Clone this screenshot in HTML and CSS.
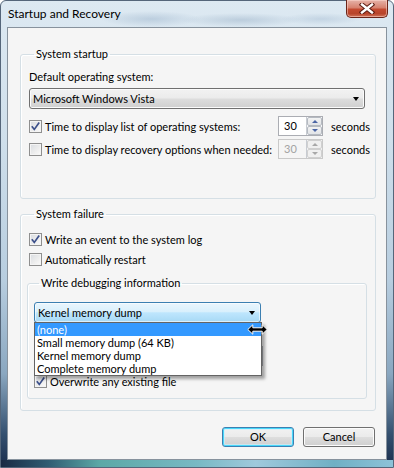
FILE: index.html
```html
<!DOCTYPE html>
<html>
<head>
<meta charset="utf-8">
<title>Startup and Recovery</title>
<link rel="stylesheet" href="styles.css">
</head>
<body>
<div class="window">
  <div class="titlebar">
    <span class="title">Startup and Recovery</span>
    <div class="close">
      <svg width="16" height="11" viewBox="0 0 16 11"><path d="M3 1.5 L13 9.5 M13 1.5 L3 9.5" stroke="#5a1c12" stroke-width="4.4" stroke-linecap="square"/><path d="M3 1.5 L13 9.5 M13 1.5 L3 9.5" stroke="#ffffff" stroke-width="2.4" stroke-linecap="square"/></svg>
    </div>
  </div>
  <div class="client">
    <fieldset class="group g1">
      <legend>System startup</legend>
      <div class="label">Default operating system:</div>
      <div class="combo">
        <span class="combo-text">Microsoft Windows Vista</span>
        <span class="arrow"></span>
      </div>
      <div class="row timer">
        <span class="check checked"><svg width="11" height="11" viewBox="0 0 11 11"><path d="M1.8 5.2 L4.3 8.4 L9.2 1.6" fill="none" stroke="#3b4f8a" stroke-width="1.7"/></svg></span>
        <span class="row-label">Time to display list of operating systems:</span>
        <div class="spin">
          <span class="spin-value">30</span>
          <span class="spin-btns"><span class="sb up"></span><span class="sb down"></span></span>
        </div>
        <span class="unit">seconds</span>
      </div>
      <div class="row timer second">
        <span class="check"></span>
        <span class="row-label">Time to display recovery options when needed:</span>
        <div class="spin disabled">
          <span class="spin-value">30</span>
          <span class="spin-btns"><span class="sb up"></span><span class="sb down"></span></span>
        </div>
        <span class="unit">seconds</span>
      </div>
    </fieldset>

    <fieldset class="group g2">
      <legend>System failure</legend>
      <div class="row">
        <span class="check checked"><svg width="11" height="11" viewBox="0 0 11 11"><path d="M1.8 5.2 L4.3 8.4 L9.2 1.6" fill="none" stroke="#3b4f8a" stroke-width="1.7"/></svg></span>
        <span class="row-label">Write an event to the system log</span>
      </div>
      <div class="row second-fail">
        <span class="check"></span>
        <span class="row-label">Automatically restart</span>
      </div>
      <fieldset class="group g3">
        <legend>Write debugging information</legend>
        <div class="combo-wrap">
          <div class="combo hot">
            <span class="combo-text">Kernel memory dump</span>
            <span class="arrow"></span>
          </div>
          <ul class="droplist">
            <li class="selected">(none)</li>
            <li>Small memory dump (64 KB)</li>
            <li>Kernel memory dump</li>
            <li>Complete memory dump</li>
          </ul>
        </div>
        <div class="label dump-label"></div>
        <div class="textbox"></div>
        <div class="row overwrite">
          <span class="check checked"><svg width="11" height="11" viewBox="0 0 11 11"><path d="M1.8 5.2 L4.3 8.4 L9.2 1.6" fill="none" stroke="#3b4f8a" stroke-width="1.7"/></svg></span>
          <span class="row-label">Overwrite any existing file</span>
        </div>
      </fieldset>
    </fieldset>

    <div class="buttons">
      <div class="btn default">OK</div>
      <div class="btn">Cancel</div>
    </div>
  </div>
  <svg class="cursor" width="21" height="11" viewBox="0 0 21 11"><path d="M0.8 5.5 L5.8 0.8 L5.8 3.8 L15.2 3.8 L15.2 0.8 L20.2 5.5 L15.2 10.2 L15.2 7.2 L5.8 7.2 L5.8 10.2 Z" fill="#000" stroke="#fff" stroke-width="1"/></svg>
</div>
</body>
</html>
```
FILE: styles.css
```css
* { box-sizing: border-box; }
html, body { margin: 0; padding: 0; }
body {
  width: 394px;
  height: 468px;
  overflow: hidden;
  font-family: Lato, "Liberation Sans", sans-serif;
  font-size: 11px;
  color: #000;
  background: #fff;
}
.window {
  position: relative;
  width: 394px;
  height: 468px;
  display: flex;
  flex-direction: column;
  border: 1px solid #55667a;
  border-radius: 6px 6px 0 0;
  background: linear-gradient(180deg, #dde9f2 0%, #cfdfeb 30%, #b7cddf 60%, #8aa7c0 80%, #34506f 93%, #1b2d4c 100%);
}
.titlebar {
  height: 26px;
  display: flex;
  align-items: flex-start;
  background:
    radial-gradient(ellipse 50px 8px at 150px 18px, rgba(150,175,200,0.45), rgba(150,175,200,0) 100%),
    radial-gradient(ellipse 60px 7px at 240px 19px, rgba(140,165,190,0.4), rgba(140,165,190,0) 100%),
    radial-gradient(ellipse 40px 6px at 320px 18px, rgba(150,175,200,0.35), rgba(150,175,200,0) 100%);
}
.title {
  font-size: 12px;
  line-height: 14px;
  padding: 6px 0 0 7px;
  color: #000;
}
.close {
  margin-left: auto;
  margin-right: 5px;
  margin-top: -1px;
  width: 42px;
  height: 18px;
  border: 1px solid #6b2519;
  border-top: none;
  border-radius: 0 0 5px 5px;
  background: linear-gradient(180deg, #e6b3a8 0%, #d7826f 45%, #c34a30 55%, #b8452b 80%, #d0735a 100%);
  box-shadow: inset 0 0 0 1px rgba(255,220,210,0.5);
  display: flex;
  align-items: center;
  justify-content: center;
}
.client {
  flex: 1;
  margin: 0 6px 7px 6px;
  border: 1px solid #87929d;
  background: #f5f5f5;
  display: flex;
  flex-direction: column;
}
.window::after {
  content: "";
  position: absolute;
  left: 0; right: 0; bottom: 0;
  height: 7px;
  background: linear-gradient(90deg, #1a2a44 0%, #2f5c72 12%, #5ba8a6 25%, #78b9c4 50%, #9fc9dc 65%, #6fb0c4 85%, #8dc2d8 100%);
}

/* group boxes */
.group {
  margin: 0;
  padding: 0;
  min-width: 0;
  border: 1px solid #d5dfe5;
  border-radius: 3px;
  box-shadow: inset 1px 1px 0 #ffffff;
}
.group legend {
  margin-left: 5px;
  padding: 0 2px;
  line-height: 14px;
  font-size: 11px;
}
.g1 {
  margin: 19px 10px 0 12px;
  padding: 8px 10px 39px 8px;
}
.g2 {
  margin: 8px 10px 0 12px;
  padding: 11px 8px 11px 8px;
}
.g3 {
  margin: 9px 0 0 -2px;
  padding: 12px 0 9px 6px;
}

.label {
  line-height: 15px;
  height: 15px;
}

/* combobox */
.combo {
  margin-top: 4px;
  height: 21px;
  border: 1px solid #707070;
  border-radius: 3px;
  background: linear-gradient(180deg, #f2f2f2 0%, #ebebeb 48%, #dddddd 52%, #cfcfcf 100%);
  box-shadow: inset 0 0 0 1px #fbfbfb;
  display: flex;
  align-items: center;
  padding: 0 5px 0 3px;
}
.combo-text { flex: 1; line-height: 15px; }
.arrow {
  width: 0; height: 0;
  border-left: 3.5px solid transparent;
  border-right: 3.5px solid transparent;
  border-top: 4px solid #000;
  margin-top: 1px;
}
.combo-wrap {
  position: relative;
  width: 227px;
}
.combo.hot {
  margin-top: 0;
  border-color: #3c7fb1;
  background: linear-gradient(180deg, #eaf6fd 0%, #d9f0fc 45%, #bee6fd 52%, #a7d9f5 100%);
  box-shadow: inset 0 0 0 1px rgba(255,255,255,0.6);
  padding-left: 3px;
}
.droplist {
  position: absolute;
  z-index: 5;
  top: 20px;
  left: 0;
  width: 228px;
  margin: 0;
  padding: 0;
  list-style: none;
  background: #fff;
  border: 1px solid #646464;
  box-shadow: 3px 3px 3px rgba(0,0,0,0.35);
}
.droplist li {
  height: 13px;
  line-height: 13px;
  padding-left: 2px;
  white-space: nowrap;
}
.droplist li.selected {
  background: #3399ff;
  color: #fff;
}

/* rows */
.row {
  display: flex;
  align-items: center;
  height: 15px;
}
.row-label { margin-left: 3px; line-height: 15px; white-space: nowrap; }
.timer {
  height: 20px;
  margin-top: 7px;
  margin-right: -8px;
}
.timer .row-label { flex: 1; min-width: 0; }
.timer.second { margin-top: 3px; }
.second-fail { margin-top: 5px; }

.check {
  flex: none;
  width: 13px;
  height: 13px;
  border: 1px solid #8f8f8f;
  background: linear-gradient(135deg, #d8dbe0 0%, #eeeeee 60%, #fbfbfb 100%);
  box-shadow: inset 0 0 0 1px #f4f4f4;
  display: flex;
  align-items: center;
  justify-content: center;
}
.check svg { display: block; }

/* spin box */
.spin {
  flex: none;
  width: 45px;
  height: 20px;
  border: 1px solid #abadb3;
  background: #fff;
  display: flex;
  margin-right: 8px;
}
.spin-value {
  flex: 1;
  padding-left: 5px;
  line-height: 18px;
}
.spin-btns {
  width: 16px;
  display: flex;
  flex-direction: column;
  border-left: 1px solid #c8ccd2;
}
.sb {
  flex: 1;
  display: flex;
  align-items: center;
  justify-content: center;
  background: linear-gradient(180deg, #f3f3f3 0%, #e2e4e7 100%);
  border: 1px solid #b5bac1;
  border-radius: 2px;
}
.sb::after {
  content: "";
  width: 0; height: 0;
  border-left: 3px solid transparent;
  border-right: 3px solid transparent;
}
.sb.up::after { border-bottom: 3px solid #4c66a5; }
.sb.down::after { border-top: 3px solid #4c66a5; }
.spin.disabled { border-color: #c9c9c9; background: #f5f5f5; }
.spin.disabled .spin-value { color: #a3a3a3; }
.spin.disabled .sb { background: #f0f0f0; border-color: #d0d0d0; }
.spin.disabled .sb.up::after { border-bottom-color: #a8a8a8; }
.spin.disabled .sb.down::after { border-top-color: #a8a8a8; }
.unit {
  flex: none;
  width: 42px;
  white-space: nowrap;
}

.dump-label { margin-top: 5px; }
.textbox {
  margin-top: 3px;
  width: 229px;
  height: 20px;
  border: 1px solid #abadb3;
  background: #fff;
}
.overwrite { margin-top: 8px; }

/* buttons */
.buttons {
  display: flex;
  justify-content: flex-end;
  gap: 9px;
  margin-top: 16px;
  padding-right: 11px;
}
.btn {
  width: 72px;
  height: 20px;
  border: 1px solid #707070;
  border-radius: 3px;
  background: linear-gradient(180deg, #f2f2f2 0%, #ebebeb 48%, #dddddd 52%, #cfcfcf 100%);
  box-shadow: inset 0 0 0 1px #fcfcfc;
  text-align: center;
  line-height: 18px;
}
.btn.default {
  border-color: #3c7fb1;
  box-shadow: inset 0 0 0 1px #48d8fb, inset 0 0 0 2px rgba(200,240,255,0.6);
}

.cursor {
  position: absolute;
  left: 246px;
  top: 323px;
  z-index: 10;
}
```
